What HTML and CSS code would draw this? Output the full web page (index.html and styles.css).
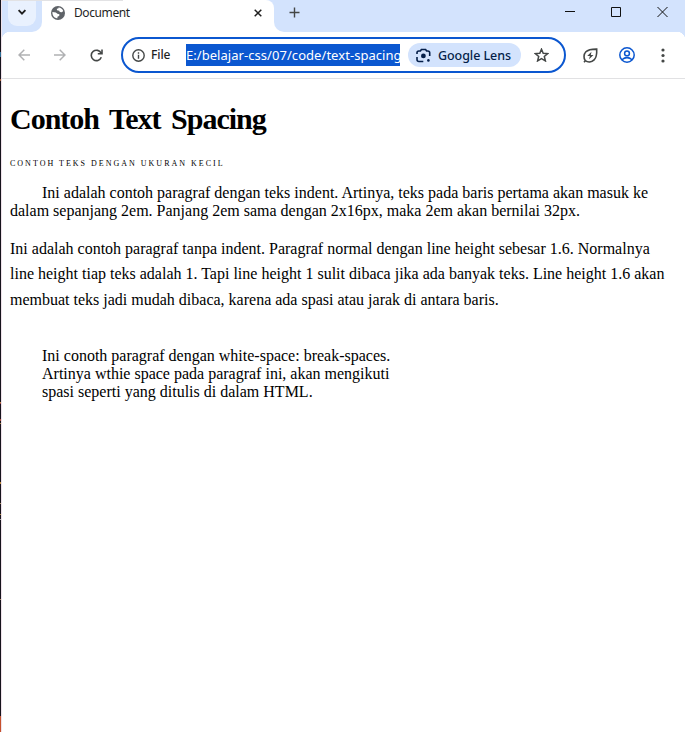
FILE: index.html
```html
<!DOCTYPE html>
<html lang="id">
<head>
<meta charset="utf-8">
<title>Document</title>
<link rel="stylesheet" href="styles.css">
</head>
<body>
<div class="desktop-edge"></div>
<div class="window">
  <header class="tabstrip">
    <div class="tab-search"><button class="search-btn" aria-label="Tabs"><svg width="10" height="10" viewBox="0 0 10 10"><path d="M1.6 3.2 5 6.6 8.4 3.2" fill="none" stroke="#1f1f1f" stroke-width="1.9"/></svg></button></div>
    <div class="tab">
      <svg class="globe" width="14" height="14" viewBox="0 0 14 14"><circle cx="7" cy="7" r="7" fill="#5f6368"/><path d="M7.6 1.4C9.5 1.5 11.5 2.8 12.3 5L10.8 6.3 8.8 6.1 8.2 4.8 6 4.3 5.8 2.8 7.3 2.4ZM1.4 6.1 4.9 6.5 6.4 7.8 8.4 8.2 8.2 10 6.7 10.4 6.2 12.4C3.4 12.2 1.2 9.6 1.4 6.1Z" fill="#fff"/></svg>
      <span class="tab-title">Document</span>
      <svg class="tab-close" width="8" height="8" viewBox="0 0 8 8"><path d="M.7.7 7.3 7.3M7.3.7.7 7.3" stroke="#1f1f1f" stroke-width="1.5"/></svg>
    </div>
    <div class="strip-rest">
      <svg class="new-tab" width="11" height="11" viewBox="0 0 11 11"><path d="M5.5.5v10M.5 5.5h10" stroke="#444746" stroke-width="1.4"/></svg>
      <div class="controls">
        <svg width="10" height="10" viewBox="0 0 10 10"><path d="M0 4.5h10" stroke="#111"/></svg>
        <svg width="10" height="10" viewBox="0 0 10 10"><path d="M.5.5h9v9h-9z" fill="none" stroke="#111"/></svg>
        <svg width="11" height="10" viewBox="0 0 11 10"><path d="m.5 0 10 10M10.5 0l-10 10" stroke="#111"/></svg>
      </div>
    </div>
  </header>
  <nav class="toolbar">
    <svg class="back" width="12" height="12" viewBox="0 0 12 12"><path d="M12 6H1M6.3.7 1 6l5.3 5.3" fill="none" stroke="#b0b1b3" stroke-width="1.5"/></svg>
    <svg class="forward" width="12" height="12" viewBox="0 0 12 12"><path d="M0 6h11M5.7.7 11 6l-5.3 5.3" fill="none" stroke="#b0b1b3" stroke-width="1.5"/></svg>
    <svg class="reload" width="13" height="13" viewBox="0 0 13 13"><path d="M11.3 8.3A5.2 5.2 0 1 1 11.2 4.3M12 .5V4.7H7.8" fill="none" stroke="#444746" stroke-width="1.6"/></svg>
    <div class="omnibox">
      <svg class="info" width="13" height="13" viewBox="0 0 13 13"><circle cx="6.5" cy="6.5" r="5.7" fill="none" stroke="#444746" stroke-width="1.4"/><path d="M6.5 5.8v4M6.5 3.3v1.5" stroke="#444746" stroke-width="1.4"/></svg>
      <span class="scheme">File</span>
      <span class="url">E:/belajar-css/07/code/text-spacing</span>
      <div class="lens">
        <svg width="15" height="15" viewBox="0 0 15 15"><path d="M1 6V4.8Q1 3 2.8 3h1.6L5.4 1.5h4.2L10.6 3h1.2Q13.7 3 13.7 4.8V8M1 9v2.5q0 2 2 2h4.3" fill="none" stroke="#041e49" stroke-width="1.6"/><circle cx="7.4" cy="7.9" r="2.4" fill="#041e49"/><circle cx="12.4" cy="12.4" r="1.3" fill="#041e49"/></svg>
        <span>Google Lens</span>
      </div>
      <svg class="star" width="15" height="14" viewBox="0 0 15 14"><path d="m7.5 1.2 1.7 4 4.5.4-3.4 2.9 1.1 4.4-3.9-2.3-3.9 2.3 1.1-4.4-3.4-2.9 4.5-.4z" fill="none" stroke="#444746" stroke-width="1.5"/></svg>
    </div>
    <svg class="leaf" width="15" height="15" viewBox="0 0 15 15"><path d="M2.3 12.7C.4 10.4.6 6.3 2.9 3.8 5.6 1 10 1.1 13.7 1.1 13.9 5 13.8 9.2 11.1 11.9 8.6 14.3 4.8 14.4 2.3 12.7ZM2.3 12.7 1 14.2" fill="none" stroke="#444746" stroke-width="1.6"/><path d="M8.5 3.8 4.2 8h2.7L6 11.2l4.5-4.3H7.8z" fill="#444746"/></svg>
    <svg class="profile" width="16" height="16" viewBox="0 0 16 16"><g fill="none" stroke="#0b57d0" stroke-width="1.5"><circle cx="8" cy="8" r="7.2"/><circle cx="8" cy="6.4" r="2.4"/><path d="M2.9 12.8Q8 8.5 13.1 12.8"/></g></svg>
    <svg class="menu" width="4" height="15" viewBox="0 0 4 15"><g fill="#444746"><circle cx="2" cy="2" r="1.6"/><circle cx="2" cy="7.5" r="1.6"/><circle cx="2" cy="13" r="1.6"/></g></svg>
  </nav>
  <main class="page">
    <h1>Contoh Text Spacing</h1>
    <p class="small">Contoh teks dengan ukuran kecil</p>
    <p class="indent">Ini adalah contoh paragraf dengan teks indent. Artinya, teks pada baris pertama akan masuk ke dalam sepanjang 2em. Panjang 2em sama dengan 2x16px, maka 2em akan bernilai 32px.</p>
    <p class="relaxed">Ini adalah contoh paragraf tanpa indent. Paragraf normal dengan line height sebesar 1.6. Normalnya line height tiap teks adalah 1. Tapi line height 1 sulit dibaca jika ada banyak teks. Line height 1.6 akan membuat teks jadi mudah dibaca, karena ada spasi atau jarak di antara baris.</p>
    <p class="spaces">
        Ini conoth paragraf dengan white-space: break-spaces.
        Artinya wthie space pada paragraf ini, akan mengikuti
        spasi seperti yang ditulis di dalam HTML.</p>
  </main>
</div>
</body>
</html>
```
FILE: styles.css
```css
* { box-sizing: border-box; }
body { margin: 0; height: 732px; display: flex; overflow: hidden; background: #fff; }
svg { display: block; flex: none; }
.desktop-edge {
  width: 1px; flex: none;
  background: linear-gradient(#16131c 0 52px, #2c6f95 52px 57px, #16131c 57px 79px, #a35f38 79px 81px, #16131c 81px 402px, #b98a48 402px 403px, #9b3940 403px 404px, #16131c 404px 419px, #a44b3c 419px 421px, #16131c 421px 423px, #a67e43 423px 424px, #16131c 424px 482px, #b58538 482px 484px, #16131c 484px 503px, #a58a61 503px 504px, #16131c 504px 514px, #a9853f 514px 515px, #16131c 515px 519px, #aaa 519px 520px, #16131c 520px 599px, #a88b69 599px 600px, #16131c 600px 716px, #c6512c 716px);
}
.window { flex: 1; min-width: 0; border-left: 1px solid #efe2ea; font-family: "Noto Sans", "Open Sans", sans-serif; font-size: 12px; color: #1f1f1f; }
.tabstrip { height: 32px; display: flex; background: linear-gradient(#d3e3fd 12px, #fff 12px); }
.tab-search { width: 40px; background: #d3e3fd; border-top: 1px solid #e2e2e4; border-radius: 0 0 10px 0; padding-left: 6px; }
.search-btn { width: 28px; height: 25px; border: 0; padding: 0 0 3px; border-radius: 0 0 9px 9px; background: #e9f1fe; display: grid; place-items: center; }
.tab { width: 232px; display: flex; align-items: center; padding: 0 12px 7px 9px; background: linear-gradient(90deg, #e2e2e4 81px, #fff 81px) 0 0 / 100% 1px no-repeat #fff; border-top-right-radius: 8px; }
.tab-title { margin-left: 9px; flex: 1; line-height: 16px; padding-top: 1px; letter-spacing: -.4px; }
.strip-rest { flex: 1; display: flex; justify-content: space-between; padding: 7px 17px 0 15px; background: #d3e3fd; border-bottom-left-radius: 10px; }
.controls { display: flex; gap: 36px; }
.toolbar { height: 47px; display: flex; align-items: center; background: radial-gradient(circle at 8px 8px, #fff 8px, #d3e3fd 8.5px) 0 0 / 8px 8px no-repeat, radial-gradient(circle at 0 8px, #fff 8px, #d3e3fd 8.5px) 100% 0 / 8px 8px no-repeat, #fff; border-bottom: 1px solid #e1e1e3; padding: 0 20px 0 16px; }
.forward { margin-left: 24px; }
.reload { margin-left: 24px; }
.omnibox { width: 445px; height: 36px; margin-left: 18px; border: 2px solid #0b57d0; border-radius: 18px; display: flex; align-items: center; padding-left: 9px; }
.scheme { margin-left: 6px; width: 35px; line-height: 18px; font-weight: 500; letter-spacing: -.1px; }
.url { width: 214px; height: 22px; background: #0b57d0; color: #fff; overflow: hidden; white-space: nowrap; font-size: 13px; line-height: 22px; letter-spacing: .05px; }
.lens { width: 113px; height: 24px; margin-left: 8px; border-radius: 12px; background: #d3e3fd; color: #041e49; display: flex; align-items: center; padding-left: 8px; font-weight: 500; font-size: 12.5px; letter-spacing: -.07px; white-space: nowrap; }
.lens span { margin-left: 7px; }
.star { margin-left: 13px; }
.leaf { margin-left: 17px; }
.profile { margin-left: 21px; }
.menu { margin-left: auto; }
.page { padding: 0 8px; display: flow-root; color: #000; font-family: "Liberation Serif", serif; font-size: 16px; }
.page p { margin: 16px 0; line-height: 18px; }
.page h1 { margin: 21.44px 0; font-size: 30px; line-height: 37px; letter-spacing: -1px; word-spacing: 4px; }
.page .small { font-size: 8px; line-height: 9px; letter-spacing: 2px; text-transform: uppercase; }
.page .indent { text-indent: 2em; }
.page .relaxed { line-height: 1.6; }
.page .spaces { white-space: break-spaces; }
```
